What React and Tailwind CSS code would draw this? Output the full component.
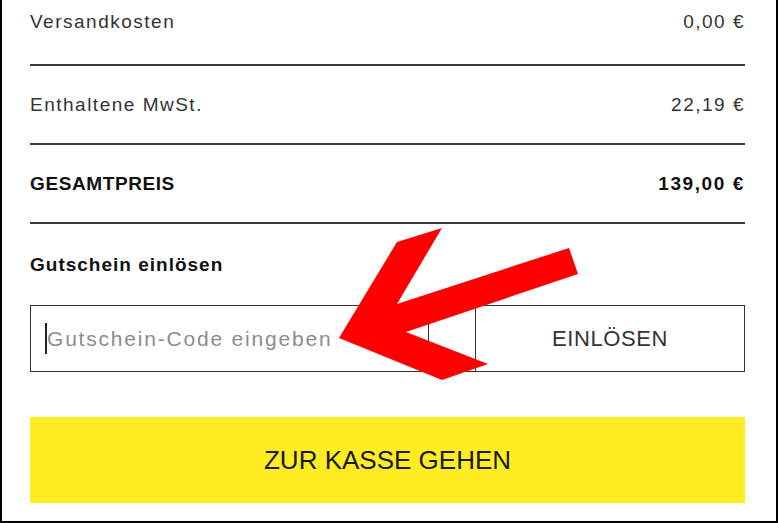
import React from "react";

const font = { fontFamily: '"Liberation Sans", Arial, sans-serif' };

const Row = ({ label, value, bold, first }) => (
  <div
    className={`flex justify-between items-center border-b-2 border-[#3a3a3a] ${
      first ? "pt-[10px] pb-[30px]" : "pt-[27px] pb-[26px]"
    }`}
  >
    <span
      className={`text-[19px] leading-[24px] ${
        bold ? "font-bold text-[#111] tracking-[0.6px]" : "text-[#333] tracking-[1.5px]"
      }`}
    >
      {label}
    </span>
    <span
      className={`text-[19px] leading-[24px] ${
        bold ? "font-bold text-[#111] tracking-[1.6px]" : "text-[#333] tracking-[1.5px]"
      }`}
    >
      {value}
    </span>
  </div>
);

const Arrow = () => (
  <svg className="absolute left-0 top-0 pointer-events-none" width="778" height="523" viewBox="0 0 778 523">
    <polygon
      fill="#ff0000"
      points="337,338 395,242 440,228 395,304 567,248 576,274 404,332 486,364 440,380"
    />
  </svg>
);

export default function App() {
  return (
    <div
      className="relative w-[778px] h-[523px] bg-white border-l-2 border-r-2 border-b-2 border-black overflow-hidden"
      style={font}
    >
      <div className="ml-[28px] w-[715px]">
        <Row first label="Versandkosten" value="0,00 €" />
        <Row label="Enthaltene MwSt." value="22,19 €" />
        <Row bold label="GESAMTPREIS" value="139,00 €" />

        <div className="mt-[29px] text-[19px] leading-[24px] font-bold text-[#111] tracking-[1px]">
          Gutschein einlösen
        </div>

        <div className="mt-[28px] flex h-[67px] border border-[#333]">
          <div className="relative w-[398px] border-r border-[#333] flex items-center pl-[16px]">
            <span className="absolute left-[14px] top-[17px] w-[1.5px] h-[31px] bg-[#222]" />
            <span className="text-[21px] tracking-[1.8px] text-[#8c8c8c]">Gutschein-Code eingeben</span>
          </div>
          <div className="w-[46px]" />
          <button className="flex-1 border-l border-[#333] flex items-center justify-center text-[22px] tracking-[0.6px] text-[#333]">
            EINLÖSEN
          </button>
        </div>

        <button className="mt-[45px] w-full h-[86px] bg-[#ffed22] flex items-center justify-center text-[26px] text-[#1a1a1a]">
          ZUR KASSE GEHEN
        </button>
      </div>
      <Arrow />
    </div>
  );
}
